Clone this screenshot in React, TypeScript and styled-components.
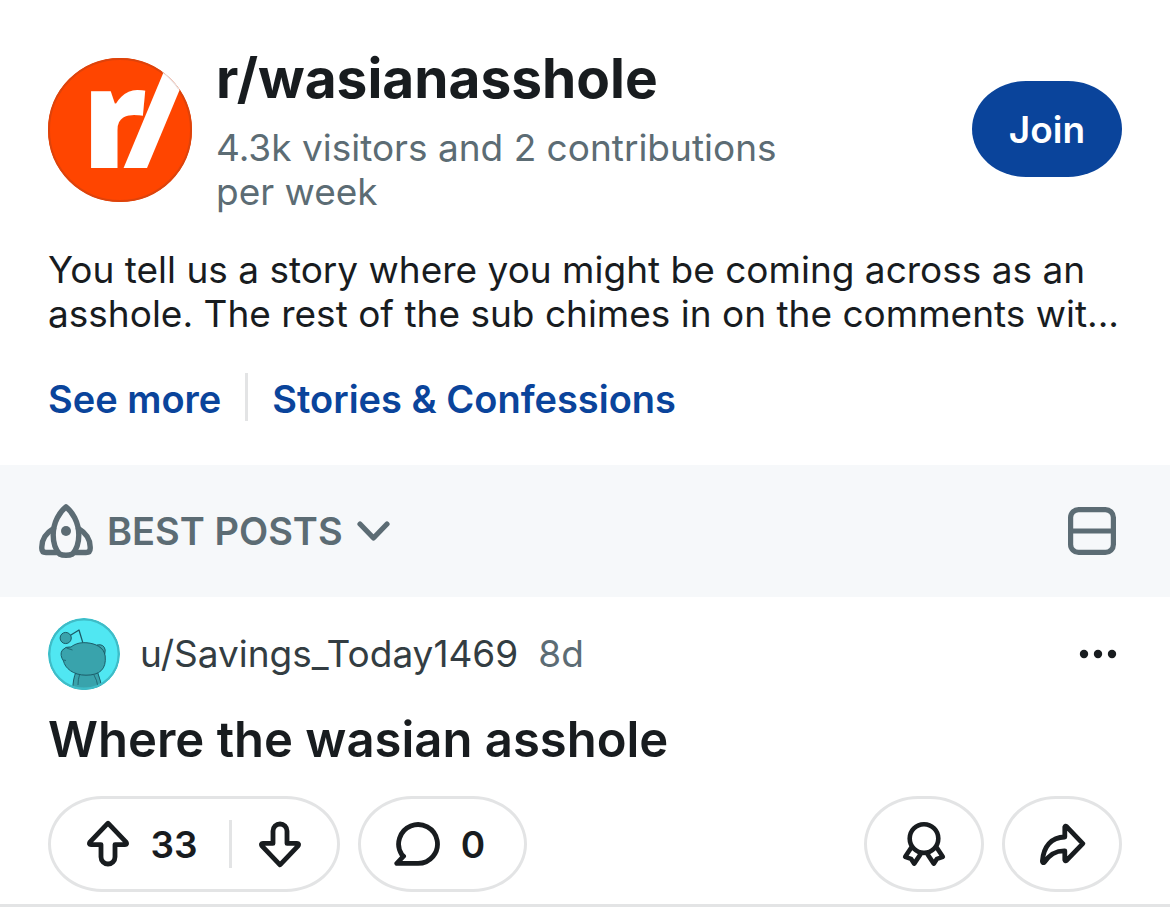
import React from "react";
import styled, { createGlobalStyle } from "styled-components";

const ink = "#181c1f";
const muted = "#5c6c74";
const blue = "#0a449b";
const line = "#e3e4e5";

const GlobalStyle = createGlobalStyle`
  *, *::before, *::after { box-sizing: border-box; }
  body {
    margin: 0;
    background: #fff;
    color: ${ink};
    font-family: Inter, "Liberation Sans", sans-serif;
  }
  h1, h2, p { margin: 0; }
  button { font: inherit; color: inherit; background: none; border: 0; padding: 0; cursor: pointer; }
  a { color: inherit; text-decoration: none; }
  svg { display: block; flex: none; }
`;

const Community = styled.header`
  padding: 48px 48px 44px;
`;

const CommunityTop = styled.div`
  display: flex;
  align-items: flex-start;
  gap: 24px;
`;

const CommunityIcon = styled.svg`
  margin-top: 10px;
  overflow: visible;
`;

const CommunityText = styled.div`
  flex: 1;
  min-width: 0;
`;

const CommunityName = styled.h1`
  font-size: 55px;
  line-height: 60px;
  font-weight: 700;
  margin-bottom: 18px;
`;

const Stats = styled.p`
  max-width: 600px;
  font-size: 37px;
  line-height: 44px;
  color: ${muted};
`;

const JoinButton = styled.button`
  flex: none;
  width: 150px;
  height: 96px;
  margin-top: 33px;
  border-radius: 54px / 48px;
  background: ${blue};
  color: #fff;
  font-size: 37px;
  font-weight: 600;
`;

const Description = styled.p`
  margin-top: 34px;
  font-size: 37px;
  line-height: 44px;
`;

const Links = styled.nav`
  display: flex;
  align-items: center;
  gap: 24px;
  margin-top: 37px;
  height: 48px;
  color: ${blue};
  font-size: 38px;
  line-height: 44px;
  font-weight: 600;

  a { padding-top: 4px; }
`;

const Separator = styled.span`
  width: 3px;
  height: 48px;
  background: ${line};
`;

const SortBar = styled.div`
  display: flex;
  align-items: center;
  justify-content: space-between;
  height: 132px;
  padding: 0 54px 0 39px;
  background: #f6f8fa;
  color: ${muted};
`;

const SortButton = styled.button`
  display: flex;
  align-items: center;
  gap: 14px;
  font-size: 38px;
  line-height: 44px;
  font-weight: 600;
`;

const Post = styled.article`
  padding: 21px 48px 12px;
  border-bottom: 3px solid ${line};
`;

const PostMeta = styled.div`
  display: flex;
  align-items: center;
  gap: 20px;
  font-size: 37px;
  line-height: 44px;
`;

const Author = styled.a`
  color: #333d42;
`;

const Age = styled.span`
  color: ${muted};
`;

const MoreButton = styled.button`
  margin-left: auto;
  padding: 16px 5px;
`;

const PostTitle = styled.h2`
  margin-top: 20px;
  font-size: 49px;
  line-height: 60px;
  font-weight: 600;
`;

const Actions = styled.div`
  display: flex;
  gap: 18px;
  margin-top: 26px;
`;

const Pill = styled.div<{ $width: number }>`
  display: flex;
  align-items: center;
  justify-content: center;
  width: ${(p) => p.$width}px;
  height: 96px;
  border: 3px solid ${line};
  border-radius: 54px / 48px;
  font-size: 37px;
  font-weight: 600;
`;

const PillButton = styled(Pill).attrs({ as: "button" })`
  gap: 20px;
`;

const CommentButton = styled(PillButton)`
  padding-right: 7px;
`;

const VotePart = styled.button`
  display: flex;
  align-items: center;
  gap: 20px;
`;

const VoteSeparator = styled(Separator)`
  margin: 0 26px 0 31px;
`;

const Spacer = styled.span`
  flex: 1;
`;

const stroke = {
  fill: "none",
  stroke: "currentColor",
  strokeLinecap: "round" as const,
  strokeLinejoin: "round" as const,
};

const RocketIcon = () => (
  <svg width="54" height="54" viewBox="0 0 54 54" {...stroke} strokeWidth="5.4" aria-hidden="true">
    <path d="M27 2.8C21 7.5 14.2 18 14.2 31C14.2 39 17 46 20.5 50Q23 51.3 27 51.3Q31 51.3 33.5 50C37 46 39.8 39 39.8 31C39.8 18 33 7.5 27 2.8Z" />
    <path d="M14.5 24.5C7 29 2.8 35 2.8 43V44.5Q2.8 48.5 7 48.5H18" />
    <path d="M39.5 24.5C47 29 51.2 35 51.2 43V44.5Q51.2 48.5 47 48.5H36" />
    <circle cx="27" cy="27" r="5" fill="currentColor" stroke="none" />
  </svg>
);

const ChevronIcon = () => (
  <svg width="33" height="21" viewBox="0 0 33 21" {...stroke} strokeWidth="5.2" aria-hidden="true">
    <path d="M3 3L16.5 17L30 3" />
  </svg>
);

const CardViewIcon = () => (
  <svg width="48" height="48" viewBox="0 0 48 48" {...stroke} strokeWidth="5.2" aria-hidden="true">
    <rect x="2.6" y="2.6" width="42.8" height="42.8" rx="8" />
    <path d="M3 24H45" />
  </svg>
);

const ArrowIcon = ({ down = false }: { down?: boolean }) => (
  <svg width="44" height="48" viewBox="0 0 44 48" {...stroke} strokeWidth="4.8" aria-hidden="true">
    <path
      transform={down ? "rotate(180 22 24.5)" : "translate(0 -1)"}
      d="M22 4.2L3.9 23.2Q2.6 25.6 5 25.6H15V38A7 7 0 0 0 29 38V25.6H39Q41.4 25.6 40.1 23.2Z"
    />
  </svg>
);

const CommentIcon = () => (
  <svg width="48" height="46" viewBox="0 0 48 46" {...stroke} strokeWidth="4.8" aria-hidden="true">
    <path d="M10.6 35.2L3.8 42.4H25A19.4 19.4 0 1 0 8.8 33.6L10.6 35.2" />
  </svg>
);

const AwardIcon = () => (
  <svg width="46" height="46" viewBox="0 0 46 46" {...stroke} strokeWidth="4.6" aria-hidden="true">
    <circle cx="23" cy="17.6" r="14.3" />
    <path d="M10 27L4.2 35.8L10 37.8L13.2 42.6L20 32.5" />
    <path d="M36 27L41.8 35.8L36 37.8L32.8 42.6L26 32.5" />
  </svg>
);

const ShareIcon = () => (
  <svg width="48" height="44" viewBox="0 0 48 44" {...stroke} strokeWidth="4.8" aria-hidden="true">
    <path d="M26.8 15V5Q27.2 3.4 28.6 4.6L44.8 21.6L28.6 38.4Q27.2 39.6 26.8 38V28.8C17 28.6 11.5 32.6 6.4 40.2Q4.4 41.6 4.4 39.2C5.4 24.6 13.4 15.2 26.8 15Z" />
  </svg>
);

const DotsIcon = () => (
  <svg width="38" height="10" viewBox="0 0 38 10" fill="currentColor" aria-hidden="true">
    <circle cx="5" cy="5" r="4.2" />
    <circle cx="19" cy="5" r="4.2" />
    <circle cx="33" cy="5" r="4.2" />
  </svg>
);

const UserAvatar = () => (
  <svg width="72" height="72" viewBox="0 0 72 72" aria-hidden="true">
    <defs>
      <clipPath id="user-clip">
        <circle cx="36" cy="36" r="36" />
      </clipPath>
    </defs>
    <g clipPath="url(#user-clip)">
      <circle cx="36" cy="36" r="36" fill="#50e7f2" />
      <g fill="#39a3ac" stroke="#1c5c68" strokeWidth="1" strokeLinejoin="round">
        <path d="M28 54Q25 60 24.5 74H54Q53 62 49.5 54Z" />
        <path d="M31.5 57Q30 61 30 67M46 57Q49 62 50 69" fill="none" strokeWidth="0.8" />
        <path d="M49 27Q56 25.5 57.2 32Q57.5 36 55 38" />
        <path d="M23 29C28 25 34 24.3 39 24.8C47 25.5 56 29 57.2 38C58.5 51 52 57.2 38 57.2C25 57.2 17 50 15.5 43Q11.5 37 14 32.5Q17.5 28 23 29Z" />
        <path d="M18.5 30L24.5 32M15.5 42L18 42.5" fill="none" strokeWidth="0.8" />
        <circle cx="17.7" cy="20" r="5.6" />
        <path d="M22.5 17.2L31 12L34.8 24.6" fill="none" strokeWidth="1.3" />
      </g>
      <circle cx="36" cy="36" r="34.8" fill="none" stroke="#3fbcc7" strokeWidth="2.4" />
    </g>
  </svg>
);

const CommunityAvatar = () => (
  <CommunityIcon width="144" height="144" viewBox="0 0 144 144" aria-hidden="true">
    <defs>
      <clipPath id="community-clip">
        <circle cx="72" cy="72" r="72" />
      </clipPath>
    </defs>
    <circle cx="72" cy="72" r="72" fill="#ff4500" />
    <circle cx="72" cy="72" r="71" fill="none" stroke="#dd430b" strokeWidth="2" />
    <text x="34" y="110" fill="#fff" fontFamily="Open Sans" fontSize="138" fontWeight="800">
      r
    </text>
    <g clipPath="url(#community-clip)">
      <path d="M75.6 110L123.6 -5H147L99 110Z" fill="#fff" />
      <path d="M115 14A72 72 0 0 1 131 31" fill="none" stroke="#e6dcdc" strokeWidth="2" />
    </g>
  </CommunityIcon>
);

export default function App() {
  return (
    <>
      <GlobalStyle />
      <main>
        <Community>
          <CommunityTop>
            <CommunityAvatar />
            <CommunityText>
              <CommunityName>r/wasianasshole</CommunityName>
              <Stats>4.3k visitors and 2 contributions per week</Stats>
            </CommunityText>
            <JoinButton type="button">Join</JoinButton>
          </CommunityTop>
          <Description>
            You tell us a story where you might be coming across as an asshole. The rest of the sub
            chimes in on the comments wit...
          </Description>
          <Links>
            <a href="#more">See more</a>
            <Separator />
            <a href="#stories">Stories &amp; Confessions</a>
          </Links>
        </Community>
        <SortBar>
          <SortButton type="button">
            <RocketIcon />
            BEST POSTS
            <ChevronIcon />
          </SortButton>
          <button type="button" aria-label="Change view">
            <CardViewIcon />
          </button>
        </SortBar>
        <Post>
          <PostMeta>
            <UserAvatar />
            <Author href="#user">u/Savings_Today1469</Author>
            <Age>8d</Age>
            <MoreButton type="button" aria-label="More options">
              <DotsIcon />
            </MoreButton>
          </PostMeta>
          <PostTitle>Where the wasian asshole</PostTitle>
          <Actions>
            <Pill $width={292}>
              <VotePart type="button" aria-label="Upvote, 33">
                <ArrowIcon />
                33
              </VotePart>
              <VoteSeparator />
              <VotePart type="button" aria-label="Downvote">
                <ArrowIcon down />
              </VotePart>
            </Pill>
            <CommentButton $width={169} aria-label="Comments, 0">
              <CommentIcon />0
            </CommentButton>
            <Spacer />
            <PillButton $width={120} aria-label="Give award">
              <AwardIcon />
            </PillButton>
            <PillButton $width={120} aria-label="Share">
              <ShareIcon />
            </PillButton>
          </Actions>
        </Post>
      </main>
    </>
  );
}
